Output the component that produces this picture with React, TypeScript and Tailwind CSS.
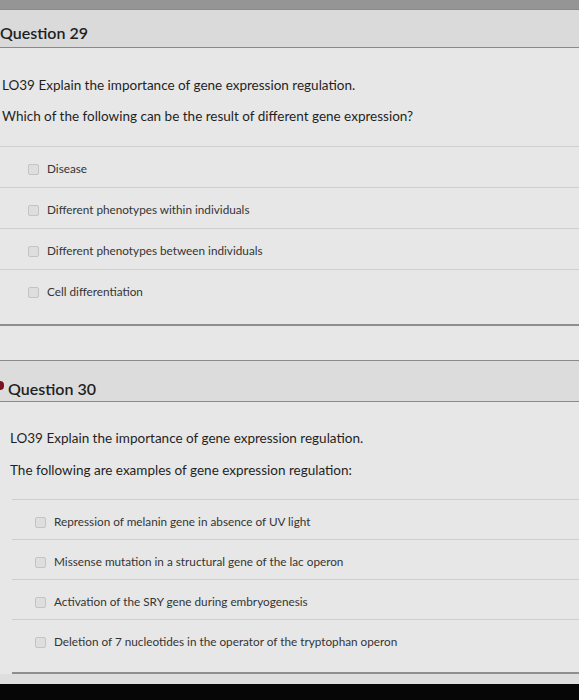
import React from "react";

type Opt = { label: string };

const q29Options: Opt[] = [
  { label: "Disease" },
  { label: "Different phenotypes within individuals" },
  { label: "Different phenotypes between individuals" },
  { label: "Cell differentiation" },
];

const q30Options: Opt[] = [
  { label: "Repression of melanin gene in absence of UV light" },
  { label: "Missense mutation in a structural gene of the lac operon" },
  { label: "Activation of the SRY gene during embryogenesis" },
  { label: "Deletion of 7 nucleotides in the operator of the tryptophan operon" },
];

function Checkbox() {
  return <span className="w-[11px] h-[11px] shrink-0 rounded-[2px] border border-[#c4c4c4] bg-[#dedede] mt-[3px]" />;
}

function OptionRow({ label, last, indent, height }: { label: string; last: boolean; indent: string; height: string }) {
  return (
    <div className={`flex items-start gap-[8px] pt-[14px] border-t border-[#cfcfcf] ${height} ${indent} ${last ? "border-b-2 border-b-[#8e8e8e]" : ""}`}>
      <Checkbox />
      <span className="text-[11.75px] leading-4 text-[#343434]">{label}</span>
    </div>
  );
}

export default function App() {
  return (
    <div className="w-[579px] h-[700px] overflow-hidden bg-[#e7e7e7] font-['Lato',sans-serif] text-[#1f1f1f]">
      {/* photo edge at the top */}
      <div className="h-[9px] bg-[#959595]" />

      {/* Question 29 */}
      <div className="h-[39px] bg-[#dadada] border-t border-b border-[#8a8a8a] pt-[13px]">
        <h2 className="text-[16px] leading-5 font-semibold pl-0">Question 29</h2>
      </div>
      <div className="pt-[27px] pl-[2px] text-[13.5px] leading-5">
        <p>LO39 Explain the importance of gene expression regulation.</p>
        <p className="mt-[11px]">Which of the following can be the result of different gene expression?</p>
      </div>
      <div className="mt-[20px]">
        {q29Options.map((o, i) => (
          <OptionRow
            key={o.label}
            label={o.label}
            last={i === q29Options.length - 1}
            indent="pl-[28px]"
            height={i === q29Options.length - 1 ? "h-[57px]" : "h-[41px]"}
          />
        ))}
      </div>

      <div className="h-[34px]" />

      {/* Question 30 */}
      <div className="relative h-[42px] bg-[#dcdcdc] border-t border-b border-[#8a8a8a] pt-[18px] pl-[8px]">
        <span className="absolute left-0 top-[20px] w-[4px] h-[9px] rounded-r-full bg-[#7a1020]" />
        <h2 className="text-[16px] leading-5 font-semibold">Question 30</h2>
      </div>
      <div className="pt-[26px] pl-[10px] text-[13.5px] leading-5">
        <p>LO39 Explain the importance of gene expression regulation.</p>
        <p className="mt-[12px]">The following are examples of gene expression regulation:</p>
      </div>
      <div className="mt-[19px] ml-[12px]">
        {q30Options.map((o, i) => (
          <OptionRow
            key={o.label}
            label={o.label}
            last={i === q30Options.length - 1}
            indent="pl-[23px]"
            height={i === q30Options.length - 1 ? "h-[55px]" : "h-[40px]"}
          />
        ))}
      </div>
      <div className="h-[10px] bg-[#dedede]" />
      <div className="h-[30px] bg-[#060606]" />
    </div>
  );
}
